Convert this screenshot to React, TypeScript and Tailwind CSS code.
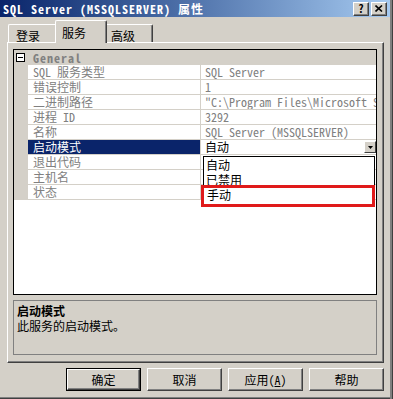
const FONT = "font-['Noto_Sans_Mono_CJK_SC','Liberation_Mono','Noto_Sans_CJK_SC',monospace]";

type Row = { name: string; value: string; selected?: boolean };

const rows: Row[] = [
  { name: 'SQL 服务类型', value: 'SQL Server' },
  { name: '错误控制', value: '1' },
  { name: '二进制路径', value: '"C:\\Program Files\\Microsoft SQL Server\\MSSQL.1\\MSSQL\\Binn\\sqlservr.exe" -sMSSQLSERVER' },
  { name: '进程 ID', value: '3292' },
  { name: '名称', value: 'SQL Server (MSSQLSERVER)' },
  { name: '启动模式', value: '自动', selected: true },
  { name: '退出代码', value: '' },
  { name: '主机名', value: '' },
  { name: '状态', value: '' },
];

const buttons = ['确定', '取消', 'apply', '帮助'];

const CaptionButton = ({ children }: { children: React.ReactNode }) => (
  <div className="flex h-[14px] w-[16px] items-center justify-center border-t border-l border-white border-r border-b border-r-[#404040] border-b-[#404040] bg-[#d4d0c8] shadow-[inset_-1px_-1px_0_#808080]">
    {children}
  </div>
);

const PropRow = ({ row }: { row: Row }) => (
  <div className="flex h-[15px] border-b border-[#d4d0c8] bg-white">
    <div className="w-[14px] shrink-0 bg-[#d4d0c8]" />
    <div
      className={`w-[173px] shrink-0 whitespace-nowrap border-r border-[#d4d0c8] pl-[5px] leading-[14px] ${
        row.selected ? 'bg-[#0a246a] text-white' : 'text-[#808080]'
      }`}
    >
      {row.name}
    </div>
    <div className={`relative flex-1 overflow-hidden whitespace-nowrap pl-[4px] leading-[14px] ${row.selected ? 'text-black' : 'text-[#808080]'}`}>
      {row.value}
      {row.selected && (
        <div className="absolute right-0 top-[1px] flex h-[12px] w-[12px] items-center justify-center border-t border-l border-white border-r border-b border-r-[#404040] border-b-[#404040] bg-[#d4d0c8]">
          <svg width="5" height="3" viewBox="0 0 5 3">
            <path d="M0 0h5L2.5 3z" fill="#000" />
          </svg>
        </div>
      )}
    </div>
  </div>
);

export default function App() {
  return (
    <div className={`flex h-[399px] w-[393px] overflow-hidden bg-[#d4d0c8] text-[12px] text-black ${FONT}`}>
      <div className="flex w-[390px] flex-col">
        {/* caption */}
        <div className="flex h-[17px] shrink-0 items-center justify-between bg-gradient-to-r from-[#0a246a] to-[#a6caf0] pl-[3px] pr-[3px]">
          <span className="text-[12px] font-bold leading-[14px] tracking-[1px] text-white">SQL Server (MSSQLSERVER) 属性</span>
          <div className="flex gap-[2px]">
            <CaptionButton>
              <span className="text-[11px] font-bold leading-none">?</span>
            </CaptionButton>
            <CaptionButton>
              <svg width="8" height="7" viewBox="0 0 8 7">
                <path d="M0.5 0.5L7 6.5M7 0.5L0.5 6.5" stroke="#000" strokeWidth="1.6" />
              </svg>
            </CaptionButton>
          </div>
        </div>

        {/* tabs */}
        <div className="flex h-[25px] shrink-0 items-end pl-[8px]">
          <div className="h-[18px] w-[47px] rounded-tl-[2px] border-t border-l border-white pl-[7px] pt-[4px] leading-[14px]">登录</div>
          <div className="relative z-10 -mb-px h-[23px] w-[52px] rounded-t-[2px] border-t border-l border-white border-r border-r-[#404040] bg-[#d4d0c8] pl-[6px] pt-[5px] leading-[14px] shadow-[inset_-1px_0_0_#808080]">
            服务
          </div>
          <div className="h-[18px] w-[46px] rounded-tr-[2px] border-t border-r border-t-white border-r-[#404040] pl-[4px] pt-[4px] leading-[14px] shadow-[inset_-1px_0_0_#808080]">
            高级
          </div>
        </div>

        {/* panel */}
        <div className="ml-[7px] h-[321px] w-[377px] shrink-0 border-t border-l border-white border-r border-b border-r-[#404040] border-b-[#404040] pl-[5px] pt-[6px] shadow-[inset_-1px_-1px_0_#808080]">
          <div className="relative h-[246px] w-[364px] border border-black bg-white">
            <div className="flex h-[15px] items-center bg-[#d4d0c8]">
              <div className="ml-[2px] flex h-[9px] w-[9px] items-center justify-center border border-black bg-white">
                <div className="h-px w-[5px] bg-black" />
              </div>
              <span className="ml-[8px] font-bold leading-[14px] tracking-[1px] text-[#808080]">General</span>
            </div>
            {rows.map(r => (
              <PropRow key={r.name} row={r} />
            ))}

            {/* dropdown list */}
            <div className="absolute left-[189px] top-[106px] flex h-[50px] w-[172px] flex-col border border-black bg-white pl-[2px] leading-[15px] text-black">
              <span>自动</span>
              <span>已禁用</span>
              <span className="pl-px">手动</span>
            </div>
            <div className="absolute left-[187px] top-[135px] h-[22px] w-[174px] border-[3px] border-[#e01a1a]" />
          </div>

          <div className="mt-[5px] h-[55px] w-[364px] border border-[#808080] px-[3px] pt-[2px] leading-[15px]">
            <div className="font-bold">启动模式</div>
            <div>此服务的启动模式。</div>
          </div>
        </div>

        {/* buttons */}
        <div className="mt-[5px] flex shrink-0 justify-end gap-[6px] pr-[6px]">
          {buttons.map((b, i) => (
            <div
              key={b}
              className={`flex h-[23px] w-[75px] items-center justify-center ${i === 0 ? 'border border-black' : ''}`}
            >
              <div className="flex h-full w-full items-center justify-center border-t border-l border-white border-r border-b border-r-[#404040] border-b-[#404040] shadow-[inset_-1px_-1px_0_#808080]">
                {b === 'apply' ? (
                  <span>
                    应用(<u>A</u>)
                  </span>
                ) : (
                  b
                )}
              </div>
            </div>
          ))}
        </div>

        <div className="flex-1" />
        <div className="h-[2px] shrink-0 border-t border-[#808080] bg-[#404040]" />
      </div>
      <div className="w-[3px] shrink-0 border-r border-[#404040] bg-[#d4d0c8] shadow-[inset_-2px_0_0_#808080]" />
    </div>
  );
}
